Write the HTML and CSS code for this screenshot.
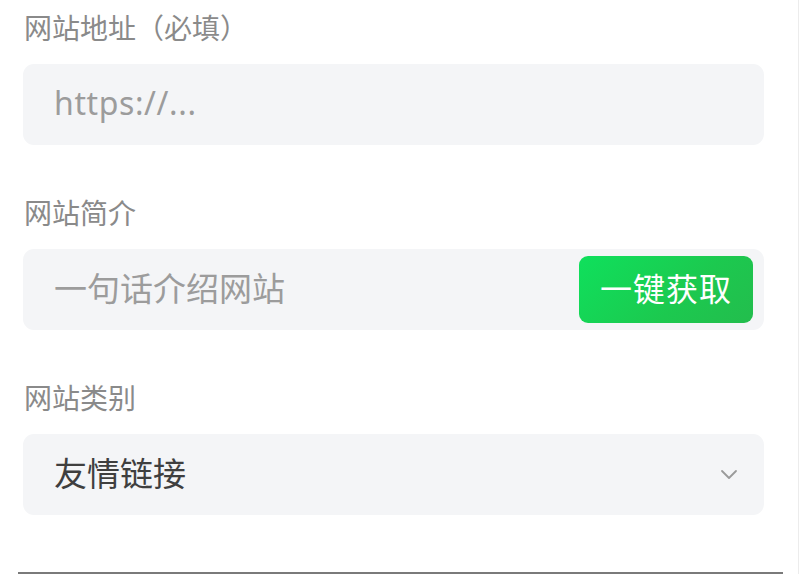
FILE: index.html
```html
<!DOCTYPE html>
<html lang="zh">
<head>
<meta charset="utf-8">
<link rel="stylesheet" href="styles.css">
</head>
<body>
<div class="page">
  <div class="field">
    <div class="label">网站地址（必填）</div>
    <div class="box"><span class="placeholder latin">https://...</span></div>
  </div>
  <div class="field">
    <div class="label">网站简介</div>
    <div class="box with-btn">
      <span class="placeholder">一句话介绍网站</span>
      <button class="fetch-btn">一键获取</button>
    </div>
  </div>
  <div class="field">
    <div class="label">网站类别</div>
    <div class="box select">
      <span class="value">友情链接</span>
      <svg class="chev" width="18" height="12" viewBox="0 0 18 12"><path d="M2 2 L9 9 L16 2" fill="none" stroke="#9a9a9a" stroke-width="1.8" stroke-linecap="round" stroke-linejoin="round"/></svg>
    </div>
  </div>
  <div class="bottom-edge"></div>
</div>
</body>
</html>
```
FILE: styles.css
```css
html, body {
  margin: 0;
  padding: 0;
  background: #ffffff;
}
body {
  font-family: "Noto Sans CJK SC", "Noto Sans", sans-serif;
  overflow: hidden;
  height: 574px;
}
.page {
  width: 799px;
  height: 574px;
  border-right: 1px solid #ececec;
  padding-top: 7px;
  box-sizing: border-box;
}
.field {
  margin-left: 23px;
  width: 741px;
  margin-bottom: 47px;
}
.label {
  height: 40px;
  line-height: 40px;
  font-size: 28px;
  color: #8a8a8a;
  padding-left: 1px;
  margin-bottom: 17px;
}
.box {
  height: 81px;
  background: #f4f5f7;
  border-radius: 11px;
  display: flex;
  align-items: center;
  padding-left: 31px;
  box-sizing: border-box;
}
.placeholder,
.value {
  padding-bottom: 6px;
}
.placeholder {
  font-size: 33px;
  color: #9c9c9c;
}
.placeholder.latin {
  font-family: "Noto Sans", sans-serif;
  font-size: 32px;
  letter-spacing: 0.6px;
  padding-bottom: 4px;
}
.with-btn {
  justify-content: space-between;
  padding-right: 11px;
}
.fetch-btn {
  height: 67px;
  width: 174px;
  border: none;
  border-radius: 9px;
  background: linear-gradient(135deg, #0fe05c 0%, #1cc94f 60%, #23bd4d 100%);
  color: #ffffff;
  font-family: "Noto Sans CJK SC", sans-serif;
  font-size: 32px;
  padding: 0 0 5px 0;
  letter-spacing: 1px;
}
.select {
  justify-content: space-between;
  padding-right: 26px;
}
.value {
  font-size: 33px;
  color: #3f3f3f;
}
.chev {
  display: block;
}
.field:last-of-type {
  margin-bottom: 0;
}
.bottom-edge {
  margin-top: 57px;
  margin-left: 18px;
  width: 765px;
  height: 2px;
  background: #7a7a7a;
}
```
